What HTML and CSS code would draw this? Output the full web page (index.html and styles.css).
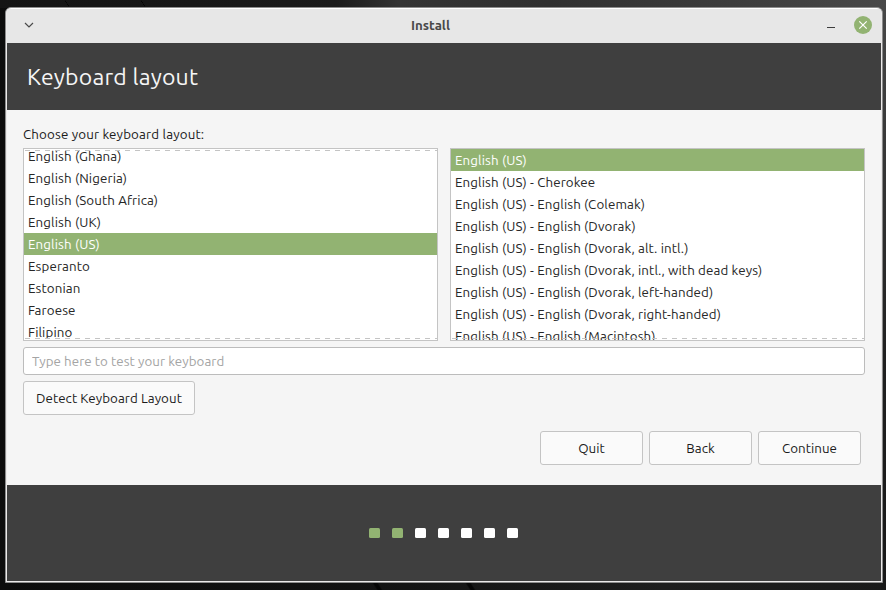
FILE: index.html
```html
<!DOCTYPE html>
<html lang="en">
<head>
<meta charset="utf-8">
<title>Install</title>
<link rel="stylesheet" href="styles.css">
</head>
<body>
<div class="window">
  <header class="titlebar">
    <svg class="menu-icon" width="12" height="8" viewBox="0 0 12 8"><path d="M2 2l4 4 4-4" fill="none" stroke="#4a4a4a" stroke-width="1.2"/></svg>
    <span class="title">Install</span>
    <div class="controls">
      <svg width="8" height="8" viewBox="0 0 8 8"><path d="M0 6.5h8" stroke="#3c3c3c"/></svg>
      <svg width="18" height="18" viewBox="0 0 18 18"><circle cx="9" cy="9" r="9" fill="#92b372"/><path d="M5.3 5.3l7.4 7.4M12.7 5.3l-7.4 7.4" stroke="#fff" stroke-width="1.2"/></svg>
    </div>
  </header>
  <div class="banner"><h1>Keyboard layout</h1></div>
  <main class="content">
    <p class="prompt">Choose your keyboard layout:</p>
    <div class="lists">
      <ul class="list scrolled more">
        <li>English (Ghana)</li>
        <li>English (Nigeria)</li>
        <li>English (South Africa)</li>
        <li>English (UK)</li>
        <li class="selected">English (US)</li>
        <li>Esperanto</li>
        <li>Estonian</li>
        <li>Faroese</li>
        <li>Filipino</li>
      </ul>
      <ul class="list more">
        <li class="selected">English (US)</li>
        <li>English (US) - Cherokee</li>
        <li>English (US) - English (Colemak)</li>
        <li>English (US) - English (Dvorak)</li>
        <li>English (US) - English (Dvorak, alt. intl.)</li>
        <li>English (US) - English (Dvorak, intl., with dead keys)</li>
        <li>English (US) - English (Dvorak, left-handed)</li>
        <li>English (US) - English (Dvorak, right-handed)</li>
        <li>English (US) - English (Macintosh)</li>
      </ul>
    </div>
    <input class="entry" type="text" placeholder="Type here to test your keyboard">
    <button class="button detect">Detect Keyboard Layout</button>
    <div class="actions">
      <button class="button">Quit</button>
      <button class="button">Back</button>
      <button class="button">Continue</button>
    </div>
  </main>
  <footer class="progress">
    <i class="dot done"></i><i class="dot done"></i><i class="dot"></i><i class="dot"></i><i class="dot"></i><i class="dot"></i><i class="dot"></i>
  </footer>
</div>
</body>
</html>
```

FILE: styles.css
```css
* { box-sizing: border-box; margin: 0; padding: 0; }

body {
  width: 886px;
  height: 590px;
  padding: 7px 0 0 5px;
  overflow: hidden;
  font: 13.333px/22px "Ubuntu", "Noto Sans", sans-serif;
  letter-spacing: 0.12px;
  color: #262626;
  background:
    linear-gradient(57deg, transparent 47%, #050505 49%, #050505 51%, transparent 53%) 60px 0 / 14px 7px no-repeat,
    linear-gradient(57deg, transparent 47%, #050505 49%, #050505 51%, transparent 53%) 136px 0 / 14px 7px no-repeat,
    linear-gradient(57deg, transparent 35%, #050505 45%, #050505 60%, transparent 70%) 370px 583px / 14px 7px no-repeat,
    linear-gradient(57deg, transparent 35%, #050505 45%, #050505 60%, transparent 70%) 463px 583px / 14px 7px no-repeat,
    linear-gradient(90deg, #141414 0, #1b1b1b 38%, #343434 45%, #303030 62%, #484848 100%) 0 0 / 100% 8px no-repeat,
    linear-gradient(#484848, #202020 60%, #181818) 100% 0 / 5px 100% no-repeat,
    linear-gradient(90deg, #0c0c0c 0, #121212 40%, #1e1e1e 75%, #1a1a1a 100%) 0 0 / 886px 590px no-repeat;
}

.window {
  display: flex;
  flex-direction: column;
  width: 878px;
  height: 576px;
  border: 1px solid #8c8c8c;
  border-radius: 6px 6px 0 0;
  background: #ebe9e9;
  padding: 1px;
  overflow: hidden;
  box-shadow: inset 0 1px #fff;
}

.titlebar {
  display: grid;
  grid-template-columns: 404px auto 1fr;
  align-items: center;
  height: 34px;
  padding: 0 9px 2px 0;
  background: #e7e7e7;
}
.menu-icon { margin-left: 16px; }
.title { padding-top: 2px; font-weight: 600; color: #4a4a4a; letter-spacing: 0; }
.controls { display: flex; justify-content: flex-end; align-items: center; gap: 19px; }

.banner { height: 67px; padding: 1px 20px 0; background: #3f3f3f; }
.banner h1 { font-size: 23px; font-weight: 400; line-height: 66px; letter-spacing: 0.2px; color: #f5f5f5; }

.content {
  display: flex;
  flex-direction: column;
  height: 375px;
  padding: 13px 16px 0;
  background: #f5f5f5;
}
.prompt { height: 25px; padding-top: 1px; color: #1a1a1a; letter-spacing: 0.16px; }
.lists { display: grid; grid-template-columns: 415px 415px; gap: 12px; height: 193px; }

.list {
  position: relative;
  height: 193px;
  overflow: hidden;
  list-style: none;
  background: #fff;
  border: 1px solid #c4c4c4;
}
.list li { height: 22px; padding: 1px 0 0 4px; white-space: nowrap; }
.list .selected { background: #92b372; color: #fff; }
.scrolled li:first-child { margin-top: -4px; }
.more::after, .scrolled::before {
  content: "";
  position: absolute;
  left: 1px;
  right: 0;
  height: 1px;
  background: repeating-linear-gradient(90deg, #c4c4c4 0 5px, transparent 5px 10px);
}
.scrolled::before { top: 1px; }
.more::after { bottom: 1px; }

.entry {
  height: 28px;
  margin-top: 6px;
  padding: 0 8px;
  font: inherit;
  letter-spacing: 0.06px;
  background: #fff;
  border: 1px solid #bcbcbc;
  border-radius: 3px;
}
.entry::placeholder { color: #a4a4a4; opacity: 1; }

.button {
  width: 103px;
  height: 34px;
  padding-top: 2px;
  font: inherit;
  letter-spacing: 0.06px;
  color: #1a1a1a;
  background: #fafafa;
  border: 1px solid #c4c4c4;
  border-radius: 3px;
}
.detect { width: 172px; margin-top: 6px; }
.actions { display: flex; justify-content: flex-end; gap: 6px; margin: 16px 4px 0 0; }

.progress {
  display: flex;
  justify-content: center;
  gap: 12px;
  height: 96px;
  padding-top: 43px;
  padding-right: 1px;
  background: #3f3f3f;
}
.dot { width: 11px; height: 10px; border-radius: 1.5px; background: #fff; }
.done { background: #92b372; }
```
